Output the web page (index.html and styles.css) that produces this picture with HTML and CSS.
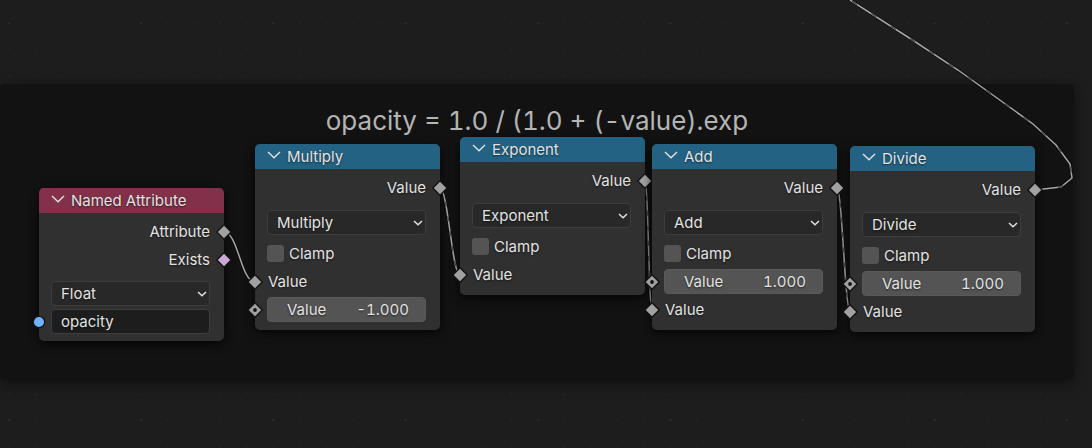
FILE: index.html
```
<!DOCTYPE html>
<html lang="en">
<head>
<meta charset="utf-8">
<title>Geometry Nodes</title>
<link rel="stylesheet" href="styles.css">
</head>
<body>
<svg class="defs" aria-hidden="true">
  <symbol id="diamond" viewBox="0 0 16 16"><path d="M8 .8 15.2 8 8 15.2 .8 8Z" fill="currentColor" stroke="#141414" stroke-width="1.4" stroke-linejoin="round"/></symbol>
  <symbol id="diamond-dot" viewBox="0 0 16 16"><path d="M8 .8 15.2 8 8 15.2 .8 8Z" fill="currentColor" stroke="#141414" stroke-width="1.4" stroke-linejoin="round"/><circle cx="8" cy="8" r="1.9" fill="#141414"/></symbol>
  <symbol id="dot" viewBox="0 0 16 16"><circle cx="8" cy="8" r="5.7" fill="currentColor" stroke="#141414" stroke-width="1.3"/></symbol>
  <symbol id="collapse" viewBox="0 0 14 8"><path d="M1 1 7 6.8 13 1" fill="none" stroke="currentColor" stroke-width="1.4"/></symbol>
  <symbol id="caret" viewBox="0 0 10 6"><path d="M1 1 5 4.8 9 1" fill="none" stroke="currentColor" stroke-width="1.5"/></symbol>
</svg>
<main class="canvas">
  <svg class="grid" aria-hidden="true">
    <defs>
      <pattern id="minor" x="-4.3" y="10.2" width="26.45" height="26.45" patternUnits="userSpaceOnUse"><circle cx="13.2" cy="13.2" r="0.7" fill="#292929"/></pattern>
      <pattern id="major" x="-57" y="-42.7" width="132.25" height="132.25" patternUnits="userSpaceOnUse"><circle cx="66" cy="66" r="1.2" fill="#2b2b2b"/></pattern>
    </defs>
    <rect width="100%" height="100%" fill="url(#minor)"/>
    <rect width="100%" height="100%" fill="url(#major)"/>
  </svg>
  <section class="frame"><h1 class="frame-title">opacity = 1.0 / (1.0 + (-value).exp</h1></section>
  <svg class="wires" aria-hidden="true">
    <path class="wire-edge" d="M224 232C238 232 241 282 255 282M440 188C448 188 452 275 460 275M645 181C648 181 649 310 652 310M837 188C842 188 845 311 850 311M1035 190 1061 187 1072 178 1070 164 1056 145 1033 124 997 98 958 70 914 41 850 0"/>
    <path class="wire" d="M224 232C238 232 241 282 255 282M440 188C448 188 452 275 460 275M645 181C648 181 649 310 652 310M837 188C842 188 845 311 850 311M1035 190 1061 187 1072 178 1070 164 1056 145 1033 124 997 98 958 70 914 41 850 0"/>
    <path class="wire-dash" d="M440 188C448 188 452 275 460 275M645 181C648 181 649 310 652 310M837 188C842 188 845 311 850 311"/>
    <path class="wire-dash wire-dash-long" d="M1035 190 1061 187 1072 178 1070 164 1056 145 1033 124 997 98 958 70 914 41 850 0"/>
  </svg>

  <article class="node node-attribute">
    <header class="head head-input"><svg class="collapse"><use href="#collapse"/></svg><h2>Named Attribute</h2></header>
    <div class="body">
      <div class="row output">Attribute<svg class="socket out float"><use href="#diamond"/></svg></div>
      <div class="row output">Exists<svg class="socket out bool"><use href="#diamond"/></svg></div>
      <div class="row menu"><select aria-label="Data type"><option>Float</option></select><svg class="caret"><use href="#caret"/></svg></div>
      <div class="row"><svg class="socket in string"><use href="#dot"/></svg><input class="text" type="text" aria-label="Name" value="opacity"></div>
    </div>
  </article>

  <article class="node node-multiply">
    <header class="head"><svg class="collapse"><use href="#collapse"/></svg><h2>Multiply</h2></header>
    <div class="body">
      <div class="row output">Value<svg class="socket out float"><use href="#diamond"/></svg></div>
      <div class="row menu"><select aria-label="Operation"><option>Multiply</option></select><svg class="caret"><use href="#caret"/></svg></div>
      <label class="row check"><input type="checkbox">Clamp</label>
      <div class="row input"><svg class="socket in float"><use href="#diamond"/></svg>Value</div>
      <div class="row"><svg class="socket in float"><use href="#diamond-dot"/></svg><label class="number">Value<input type="text" value="-1.000"></label></div>
    </div>
  </article>

  <article class="node node-exponent">
    <header class="head"><svg class="collapse"><use href="#collapse"/></svg><h2>Exponent</h2></header>
    <div class="body">
      <div class="row output">Value<svg class="socket out float"><use href="#diamond"/></svg></div>
      <div class="row menu"><select aria-label="Operation"><option>Exponent</option></select><svg class="caret"><use href="#caret"/></svg></div>
      <label class="row check"><input type="checkbox">Clamp</label>
      <div class="row input"><svg class="socket in float"><use href="#diamond"/></svg>Value</div>
    </div>
  </article>

  <article class="node node-add">
    <header class="head"><svg class="collapse"><use href="#collapse"/></svg><h2>Add</h2></header>
    <div class="body">
      <div class="row output">Value<svg class="socket out float"><use href="#diamond"/></svg></div>
      <div class="row menu"><select aria-label="Operation"><option>Add</option></select><svg class="caret"><use href="#caret"/></svg></div>
      <label class="row check"><input type="checkbox">Clamp</label>
      <div class="row"><svg class="socket in float"><use href="#diamond-dot"/></svg><label class="number">Value<input type="text" value="1.000"></label></div>
      <div class="row input"><svg class="socket in float"><use href="#diamond"/></svg>Value</div>
    </div>
  </article>

  <article class="node node-divide">
    <header class="head"><svg class="collapse"><use href="#collapse"/></svg><h2>Divide</h2></header>
    <div class="body">
      <div class="row output">Value<svg class="socket out float"><use href="#diamond"/></svg></div>
      <div class="row menu"><select aria-label="Operation"><option>Divide</option></select><svg class="caret"><use href="#caret"/></svg></div>
      <label class="row check"><input type="checkbox">Clamp</label>
      <div class="row"><svg class="socket in float"><use href="#diamond-dot"/></svg><label class="number">Value<input type="text" value="1.000"></label></div>
      <div class="row input"><svg class="socket in float"><use href="#diamond"/></svg>Value</div>
    </div>
  </article>
</main>
</body>
</html>
```
FILE: styles.css
```
* { box-sizing: border-box; }

body {
  margin: 0;
  background: #1d1d1d;
  color: #e2e2e2;
  font: 15px/20px Inter, "Liberation Sans", sans-serif;
  font-variant-numeric: tabular-nums;
}

.defs { position: absolute; width: 0; height: 0; }

.canvas {
  position: relative;
  min-height: 100vh;
  overflow: hidden;
}

.grid, .wires {
  position: absolute;
  inset: 0;
  width: 100%;
  height: 100%;
}

/* Frame and nodes sit at free coordinates on the canvas */
.frame {
  position: absolute;
  left: 0;
  top: 84px;
  width: 1074px;
  height: 296px;
  padding-top: 21px;
  border-radius: 5px;
  background: #121212;
  box-shadow: 0 3px 14px rgba(0, 0, 0, .5);
}

.frame-title {
  margin: 0;
  text-align: center;
  color: #b4b4b4;
  font-size: 26px;
  line-height: 32px;
  font-weight: 400;
}

.wires path { fill: none; }
.wire-edge { stroke: #0c0c0c; stroke-width: 3; }
.wire { stroke: #a6a6a6; stroke-width: 1.5; }
.wire-dash { stroke: #505050; stroke-width: 1.6; stroke-dasharray: 5 10; }
.wire-dash-long { stroke-dasharray: 6 17; }

.node {
  position: absolute;
  width: 185px;
  border-radius: 5px;
  background: #303030;
  box-shadow: 0 3px 10px rgba(0, 0, 0, .75);
  text-shadow: 0 1px 2px rgba(0, 0, 0, .6);
}
.node-attribute { left: 39px; top: 188px; }
.node-multiply { left: 255px; top: 144px; }
.node-exponent { left: 460px; top: 137px; }
.node-add { left: 652px; top: 144px; }
.node-divide { left: 850px; top: 146px; }

.head {
  display: flex;
  align-items: center;
  gap: 6px;
  height: 25px;
  padding-left: 12px;
  border-radius: 5px 5px 0 0;
  background: #246283;
}
.head-input { background: #83314a; }
.head h2 {
  margin: 0;
  font-size: 15px;
  font-weight: 400;
}
.collapse { width: 14px; height: 8px; margin-bottom: 3px; }

.body {
  display: flex;
  flex-direction: column;
  gap: 3px;
  padding: 6px 14px 8px 12px;
}
.node-attribute .body { padding-bottom: 7px; }

.row {
  position: relative;
  display: flex;
  align-items: center;
  height: 25px;
}
.output { justify-content: flex-end; }
.input { padding-left: 1px; }
.menu { margin: 7px 0 3px; }
.node-attribute .menu { margin: 6px 0 0; }

.socket { position: absolute; width: 16px; height: 16px; }
.out { right: -22px; }
.in { left: -20px; }
.float { color: #a1a1a1; }
.bool { color: #cca6d6; }
.string { color: #70b2ff; }

select, .text, .number {
  width: 100%;
  height: 25px;
  margin: 0;
  border: 1px solid #3d3d3d;
  border-radius: 4px;
  padding: 0 9px;
  color: inherit;
  font: inherit;
  text-shadow: inherit;
}
select { appearance: none; background: #282828; }
.text { background: #1d1d1d; }
.caret { position: absolute; right: 3px; width: 10px; height: 6px; }

.check { gap: 5px; }
.check input {
  appearance: none;
  width: 17px;
  height: 17px;
  margin: 0;
  border-radius: 3px;
  background: #545454;
}

.number {
  display: flex;
  align-items: center;
  justify-content: space-between;
  padding: 0 16px 0 19px;
  border-color: #595959;
  background: #545454;
}
.number input {
  width: 64px;
  margin: 0;
  border: 0;
  padding: 0;
  background: none;
  color: inherit;
  font: inherit;
  font-variant-numeric: inherit;
  text-align: right;
  text-shadow: inherit;
}
```
